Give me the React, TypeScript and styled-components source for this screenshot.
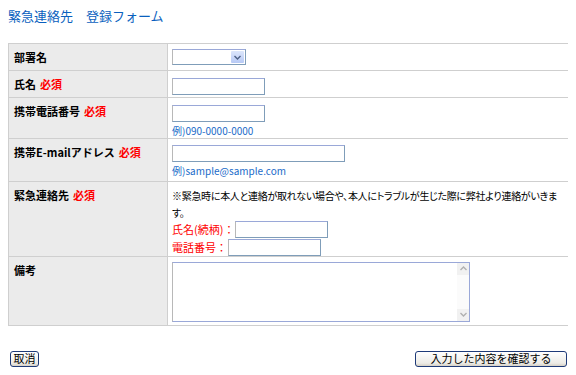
import React, { useState } from 'react';
import styled, { createGlobalStyle } from 'styled-components';

const GlobalStyle = createGlobalStyle`
  body {
    margin: 8px;
    background: #ffffff;
    font-family: "Noto Sans CJK JP", "Noto Sans", sans-serif;
    font-size: 11px;
    color: #000;
  }
`;

const Title = styled.h1`
  margin: 0;
  font-size: 13px;
  font-weight: normal;
  color: #0a5fbe;
  height: 35px;
  line-height: 16px;
`;

const FormTable = styled.table`
  width: 561px;
  border-collapse: collapse;
  border: 1px solid #cfcfcf;
`;

const Row = styled.tr<{ height: number }>`
  height: ${props => props.height}px;
`;

const LabelCell = styled.th`
  width: 148px;
  background: #ebebeb;
  border: 1px solid #cfcfcf;
  text-align: left;
  vertical-align: top;
  padding: 6px 5px 0 5px;
  font-size: 11px;
  font-weight: bold;
  line-height: 15px;
`;

const Required = styled.span`
  color: #ff0000;
  margin-left: 4px;
`;

const FieldCell = styled.td`
  border: 1px solid #cfcfcf;
  vertical-align: top;
  padding: 5px 4px 0 4px;
  line-height: 17px;
`;

const TextInput = styled.input<{ w: number }>`
  box-sizing: border-box;
  width: ${props => props.w}px;
  height: 17px;
  margin: 0;
  padding: 0 2px;
  border: 1px solid #7f9db9;
  border-top-color: #9aa8d8;
  border-left-color: #b8b8b8;
  background: #fff;
  font-size: 11px;
  vertical-align: middle;
`;

const SelectBox = styled.div`
  box-sizing: border-box;
  width: 74px;
  height: 16px;
  border: 1px solid #7f9db9;
  border-top-color: #9aa8d8;
  border-left-color: #b8b8b8;
  background: #fff;
  display: flex;
  justify-content: flex-end;
  padding: 1px;
`;

const SelectArrow = styled.div`
  width: 13px;
  height: 12px;
  background: linear-gradient(#dce6fb, #b7c9f5);
  border-radius: 1px;
  display: flex;
  align-items: center;
  justify-content: center;
`;

const Hint = styled.div`
  color: #1a6bc9;
  font-size: 10px;
  line-height: 14px;
  margin-top: 2px;
`;

const Note = styled.div`
  font-size: 10px;
  letter-spacing: -0.3px;
  line-height: 17px;
  font-feature-settings: "palt";
`;

const SubField = styled.div`
  display: flex;
  align-items: center;
  height: 17px;
  & + & {
    margin-top: 1px;
  }
`;

const SubLabel = styled.span`
  color: #ff0000;
  font-size: 11px;
  margin-right: 1px;
`;

const TextArea = styled.div`
  box-sizing: border-box;
  width: 298px;
  height: 60px;
  border: 1px solid #9aa8d8;
  border-left-color: #b8b8b8;
  background: #fff;
  display: flex;
  justify-content: flex-end;
`;

const ScrollBar = styled.div`
  width: 12px;
  display: flex;
  flex-direction: column;
  justify-content: space-between;
  background: #fbfbfb;
`;

const ScrollButton = styled.div`
  height: 12px;
  background: #f1f1f1;
  display: flex;
  align-items: center;
  justify-content: center;
`;

const Footer = styled.div`
  display: flex;
  justify-content: space-between;
  margin-top: 25px;
  padding: 0 1px 0 2px;
`;

const Button = styled.button<{ w: number }>`
  box-sizing: border-box;
  width: ${props => props.w}px;
  height: 16px;
  padding: 0;
  border: 1px solid #1e3a78;
  border-radius: 3px;
  background: linear-gradient(#ffffff, #ecebe6 80%, #d6d0c5);
  font-family: "Noto Sans CJK JP", sans-serif;
  font-size: 11px;
  line-height: 13px;
  color: #000;
`;

const Arrow: React.FC<{ up?: boolean; color?: string }> = ({ up, color = '#4d6185' }) => (
  <svg width="7" height="5" viewBox="0 0 7 5">
    <path d={up ? 'M0.5 4 L3.5 1 L6.5 4' : 'M0.5 1 L3.5 4 L6.5 1'} fill="none" stroke={color} strokeWidth="1.4" />
  </svg>
);

const App: React.FC = () => {
  const [name, setName] = useState('');

  return (
    <>
      <GlobalStyle />
      <Title>緊急連絡先　登録フォーム</Title>
      <FormTable>
        <tbody>
          <Row height={27}>
            <LabelCell>部署名</LabelCell>
            <FieldCell>
              <SelectBox>
                <SelectArrow><Arrow /></SelectArrow>
              </SelectBox>
            </FieldCell>
          </Row>
          <Row height={27}>
            <LabelCell>氏名<Required>必須</Required></LabelCell>
            <FieldCell>
              <TextInput w={93} value={name} onChange={e => setName(e.target.value)} />
            </FieldCell>
          </Row>
          <Row height={40}>
            <LabelCell>携帯電話番号<Required>必須</Required></LabelCell>
            <FieldCell>
              <TextInput w={93} />
              <Hint>例)090-0000-0000</Hint>
            </FieldCell>
          </Row>
          <Row height={43}>
            <LabelCell>携帯E-mailアドレス<Required>必須</Required></LabelCell>
            <FieldCell>
              <TextInput w={173} />
              <Hint>例)sample@sample.com</Hint>
            </FieldCell>
          </Row>
          <Row height={74}>
            <LabelCell>緊急連絡先<Required>必須</Required></LabelCell>
            <FieldCell>
              <Note>※緊急時に本人と連絡が取れない場合や、本人にトラブルが生じた際に弊社より連絡がいきます。</Note>
              <SubField>
                <SubLabel>氏名(続柄)：</SubLabel>
                <TextInput w={93} />
              </SubField>
              <SubField>
                <SubLabel>電話番号：</SubLabel>
                <TextInput w={93} />
              </SubField>
            </FieldCell>
          </Row>
          <Row height={69}>
            <LabelCell>備考</LabelCell>
            <FieldCell>
              <TextArea>
                <ScrollBar>
                  <ScrollButton><Arrow up color="#b0b0b0" /></ScrollButton>
                  <ScrollButton><Arrow color="#b0b0b0" /></ScrollButton>
                </ScrollBar>
              </TextArea>
            </FieldCell>
          </Row>
        </tbody>
      </FormTable>
      <Footer>
        <Button w={29}>取消</Button>
        <Button w={152}>入力した内容を確認する</Button>
      </Footer>
    </>
  );
};

export default App;
